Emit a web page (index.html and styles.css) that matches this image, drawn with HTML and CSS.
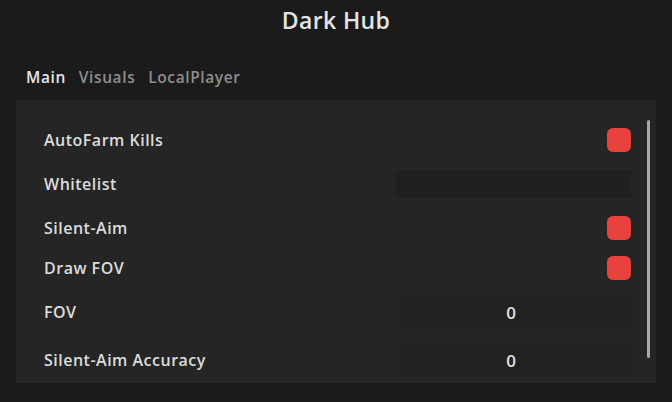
FILE: index.html
```html
<!DOCTYPE html>
<html>
<head>
<meta charset="utf-8">
<link rel="stylesheet" href="styles.css">
</head>
<body>
<div class="window">
  <header class="title">Dark Hub</header>
  <nav class="tabs">
    <span class="tab active">Main</span>
    <span class="tab">Visuals</span>
    <span class="tab">LocalPlayer</span>
  </nav>
  <section class="panel">
    <div class="row toggle-row">
      <span class="label">AutoFarm Kills</span>
      <span class="toggle"></span>
    </div>
    <div class="row input-row">
      <span class="label">Whitelist</span>
      <span class="textbox"></span>
    </div>
    <div class="row toggle-row">
      <span class="label">Silent-Aim</span>
      <span class="toggle"></span>
    </div>
    <div class="row toggle-row">
      <span class="label">Draw FOV</span>
      <span class="toggle"></span>
    </div>
    <div class="row input-row">
      <span class="label">FOV</span>
      <span class="slider">0</span>
    </div>
    <div class="row input-row">
      <span class="label">Silent-Aim Accuracy</span>
      <span class="slider">0</span>
    </div>
    <div class="scrollbar"></div>
  </section>
</div>
</body>
</html>
```
FILE: styles.css
```css
html, body {
  margin: 0;
  padding: 0;
  background: #1b1b1b;
}
.window {
  width: 672px;
  height: 402px;
  overflow: hidden;
  display: flex;
  flex-direction: column;
  font-family: "Open Sans", "Noto Sans", sans-serif;
  color: #dedede;
}
.title {
  height: 40px;
  display: flex;
  align-items: center;
  justify-content: center;
  font-size: 23px;
  font-weight: 600;
  letter-spacing: 0.4px;
  color: #e4e4e4;
}
.tabs {
  display: flex;
  gap: 13px;
  padding: 27px 0 0 26px;
  height: 20px;
  font-size: 15.5px;
  font-weight: 600;
  letter-spacing: 0.6px;
  line-height: 20px;
}
.tab {
  color: #8e8e8e;
}
.tab.active {
  color: #e6e6e6;
}
.panel {
  position: relative;
  margin: 13px 16px 0 16px;
  height: 283px;
  background: #252525;
  padding-top: 20px;
  box-sizing: border-box;
  overflow: hidden;
}
.row {
  display: flex;
  align-items: center;
  justify-content: space-between;
  padding: 0 25px 0 28px;
}
.toggle-row {
  height: 40px;
}
.input-row {
  height: 48px;
}
.label {
  font-size: 16px;
  font-weight: 600;
  letter-spacing: 0.5px;
  color: #dcdcdc;
}
.toggle {
  width: 24px;
  height: 24px;
  border-radius: 6px;
  background: #e8423f;
}
.textbox {
  width: 235px;
  height: 28px;
  background: #202020;
  border-radius: 2px;
}
.slider {
  width: 232px;
  height: 32px;
  background: #212121;
  display: flex;
  align-items: center;
  justify-content: center;
  padding-right: 8px;
  box-sizing: border-box;
  font-size: 17px;
  font-weight: 600;
  color: #e0e0e0;
}
.scrollbar {
  position: absolute;
  top: 20px;
  right: 6px;
  width: 3px;
  height: 238px;
  background: #a8a8a8;
  border-radius: 2px;
}
```
